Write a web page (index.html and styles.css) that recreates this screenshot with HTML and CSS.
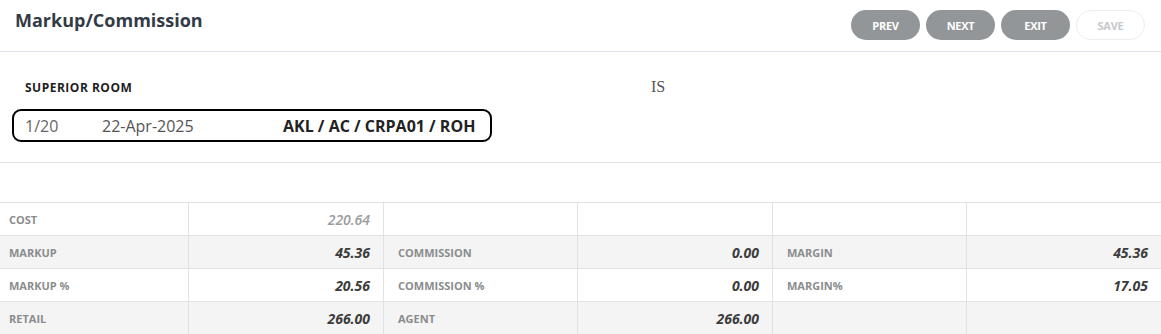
FILE: index.html
```html
<!DOCTYPE html>
<html>
<head>
<meta charset="utf-8">
<link rel="stylesheet" href="styles.css">
</head>
<body>
<div class="page">
  <header class="header">
    <h1 class="title">Markup/Commission</h1>
    <div class="actions">
      <button class="btn">PREV</button>
      <button class="btn">NEXT</button>
      <button class="btn">EXIT</button>
      <button class="btn btn-disabled">SAVE</button>
    </div>
  </header>
  <section class="info">
    <div class="info-row">
      <div class="room">SUPERIOR ROOM</div>
      <div class="status">IS</div>
    </div>
    <div class="pill">
      <span class="idx">1/20</span>
      <span class="date">22-Apr-2025</span>
      <span class="code">AKL / AC / CRPA01 / ROH</span>
    </div>
  </section>
  <div class="spacer"></div>
  <div class="grid">
    <div class="cell lbl">COST</div><div class="cell val muted">220.64</div>
    <div class="cell"></div><div class="cell"></div>
    <div class="cell"></div><div class="cell"></div>

    <div class="cell lbl alt">MARKUP</div><div class="cell val alt">45.36</div>
    <div class="cell lbl alt">COMMISSION</div><div class="cell val alt">0.00</div>
    <div class="cell lbl alt">MARGIN</div><div class="cell val alt">45.36</div>

    <div class="cell lbl">MARKUP %</div><div class="cell val">20.56</div>
    <div class="cell lbl">COMMISSION %</div><div class="cell val">0.00</div>
    <div class="cell lbl">MARGIN%</div><div class="cell val">17.05</div>

    <div class="cell lbl alt">RETAIL</div><div class="cell val alt">266.00</div>
    <div class="cell lbl alt">AGENT</div><div class="cell val alt">266.00</div>
    <div class="cell alt"></div><div class="cell alt"></div>
  </div>
</div>
</body>
</html>
```
FILE: styles.css
```css
* { box-sizing: border-box; }
html, body { margin: 0; padding: 0; background: #fff; overflow: hidden; }
body { font-family: "Open Sans", "Noto Sans", sans-serif; color: #333; }
.page { width: 1161px; overflow: hidden; }

.header {
  height: 52px;
  border-bottom: 1px solid #e2e2ec;
  display: flex;
  align-items: flex-start;
  justify-content: space-between;
  padding: 0 16px 0 15px;
}
.title {
  margin: 0;
  padding-top: 6px;
  font-size: 18px;
  font-weight: 700;
  color: #333b47;
  line-height: 28px;
}
.actions {
  display: flex;
  gap: 6px;
  padding-top: 10px;
}
.btn {
  width: 69px;
  height: 30px;
  border-radius: 15px;
  border: none;
  background: #939699;
  color: #fff;
  font-family: "Open Sans", sans-serif;
  font-size: 11px;
  font-weight: 700;
  padding: 0;
  letter-spacing: -0.3px;
}
.btn-disabled {
  background: #fff;
  border: 1.5px solid #eaeded;
  color: #c6c9cc;
}

.info {
  height: 111px;
  border-bottom: 1px solid #e2e2ec;
  padding: 26px 0 0 12px;
}
.info-row {
  display: flex;
  align-items: center;
  height: 18px;
}
.room {
  width: 639px;
  padding-left: 13px;
  font-size: 12px;
  letter-spacing: 0.5px;
  font-weight: 700;
  color: #1e1e1e;
}
.status {
  font-family: "Liberation Serif", serif;
  font-size: 16px;
  color: #555;
}
.pill {
  margin-top: 13px;
  width: 480px;
  height: 33px;
  border: 2px solid #000;
  border-radius: 9px;
  display: flex;
  align-items: center;
  padding-left: 11px;
  font-size: 16px;
}
.idx { color: #666; width: 77px; }
.date { color: #555; width: 181px; }
.code { font-weight: 700; color: #222; }

.spacer { height: 39px; }

.grid {
  display: grid;
  margin-left: -5px;
  grid-template-columns: 194px 195px 194px 195px 194px 194px;
  grid-auto-rows: 33px;
  border-top: 1px solid #e2e2e2;
}
.cell {
  border-bottom: 1px solid #e2e2e2;
  border-right: 1px solid #e2e2e2;
  display: flex;
  align-items: center;
  background: #fff;
}
.cell:nth-child(6n) { border-right: none; }
.cell.alt { background: #f4f4f4; }
.lbl {
  padding-left: 14px;
  font-size: 11px;
  font-weight: 700;
  color: #8a8c8e;
}
.val {
  justify-content: flex-end;
  padding-right: 13px;
  font-size: 14px;
  font-weight: 700;
  font-style: italic;
  color: #3c3c3c;
}
.val.muted { color: #9a9c9e; font-weight: 600; }
```
